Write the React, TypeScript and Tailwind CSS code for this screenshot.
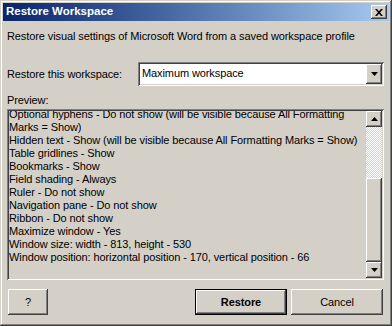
const raised =
  "shadow-[inset_-1px_-1px_0_#404040,inset_1px_1px_0_#ffffff,inset_-2px_-2px_0_#808080,inset_2px_2px_0_#d4d0c8]";
const sunken =
  "shadow-[inset_1px_1px_0_#808080,inset_-1px_-1px_0_#ffffff,inset_2px_2px_0_#404040,inset_-2px_-2px_0_#d4d0c8]";

const lines = [
  "Optional hyphens - Do not show (will be visible because All Formatting",
  "Marks = Show)",
  "Hidden text - Show (will be visible because All Formatting Marks = Show)",
  "Table gridlines - Show",
  "Bookmarks - Show",
  "Field shading - Always",
  "Ruler - Do not show",
  "Navigation pane - Do not show",
  "Ribbon - Do not show",
  "Maximize window - Yes",
  "Window size: width - 813, height - 530",
  "Window position: horizontal position - 170, vertical position - 66",
];

function Arrow({ up }: { up?: boolean }) {
  return (
    <svg width="7" height="4" viewBox="0 0 7 4">
      <polygon points={up ? "3.5,0 7,4 0,4" : "0,0 7,0 3.5,4"} fill="#000" />
    </svg>
  );
}

function ScrollBtn({ up }: { up?: boolean }) {
  return (
    <div className={`w-[16px] h-[16px] bg-[#d4d0c8] flex items-center justify-center ${raised}`}>
      <Arrow up={up} />
    </div>
  );
}

export default function App() {
  return (
    <div
      className="w-[392px] h-[326px] bg-[#d4d0c8] p-[3px] flex flex-col text-[11px] tracking-[-0.1px] text-black shadow-[inset_-1px_-1px_0_#404040,inset_1px_1px_0_#d4d0c8,inset_-2px_-2px_0_#808080,inset_2px_2px_0_#ffffff]"
      style={{ fontFamily: "Tahoma, 'Liberation Sans', Arial, sans-serif" }}
    >
      <div className="h-[18px] flex items-center justify-between pl-[3px] pr-[2px] bg-gradient-to-r from-[#0a246a] to-[#a6caf0]">
        <span className="text-white font-bold text-[11.5px] tracking-normal leading-none">Restore Workspace</span>
        <div className={`w-[16px] h-[14px] bg-[#d4d0c8] flex items-center justify-center ${raised}`}>
          <svg width="8" height="7" viewBox="0 0 8 7">
            <path d="M0 0 L2 0 L4 2.2 L6 0 L8 0 L5 3.5 L8 7 L6 7 L4 4.8 L2 7 L0 7 L3 3.5 Z" fill="#000" />
          </svg>
        </div>
      </div>

      <div className="ml-[4px] mr-[5px] flex flex-col">
        <div className="mt-[9px] leading-[13px]">
          Restore visual settings of Microsoft Word from a saved workspace profile
        </div>

        <div className="mt-[19px] h-[24px] flex items-center">
          <div className="w-[131px] shrink-0 leading-[13px]">Restore this workspace:</div>
          <div className={`flex-1 h-[24px] bg-white p-[2px] flex ${sunken}`}>
            <div className="flex-1 pl-[2px] flex items-center leading-[13px] -mt-[1px]">Maximum workspace</div>
            <div className={`w-[16px] h-[20px] bg-[#d4d0c8] flex items-center justify-center ${raised}`}>
              <Arrow />
            </div>
          </div>
        </div>

        <div className="mt-[8px] leading-[13px]">Preview:</div>

        <div className={`mt-[2px] h-[171px] bg-[#d4d0c8] p-[2px] flex ${sunken}`}>
          <div className="flex-1 overflow-hidden">
            <div className="-mt-[3px] leading-[13px] whitespace-nowrap">
              {lines.map((l) => (
                <div key={l}>{l}</div>
              ))}
            </div>
          </div>
          <div className="w-[16px] flex flex-col">
            <ScrollBtn up />
            <div className="h-[51px] bg-[repeating-conic-gradient(#ffffff_0_25%,#d4d0c8_0_50%)] bg-[length:2px_2px]" />
            <div className={`flex-1 bg-[#d4d0c8] ${raised}`} />
            <ScrollBtn />
          </div>
        </div>

        <div className="mt-[9px] flex items-center">
          <button className={`ml-[1px] w-[40px] h-[26px] bg-[#d4d0c8] leading-[13px] ${raised}`}>?</button>
          <div className="flex-1" />
          <button className="w-[92px] h-[26px] border border-black bg-[#d4d0c8] p-0">
            <div className={`w-full h-full flex items-center justify-center font-bold leading-[13px] ${raised}`}>
              Restore
            </div>
          </button>
          <button className={`ml-[4px] mr-[1px] w-[92px] h-[26px] bg-[#d4d0c8] leading-[13px] ${raised}`}>
            Cancel
          </button>
        </div>
      </div>
    </div>
  );
}
